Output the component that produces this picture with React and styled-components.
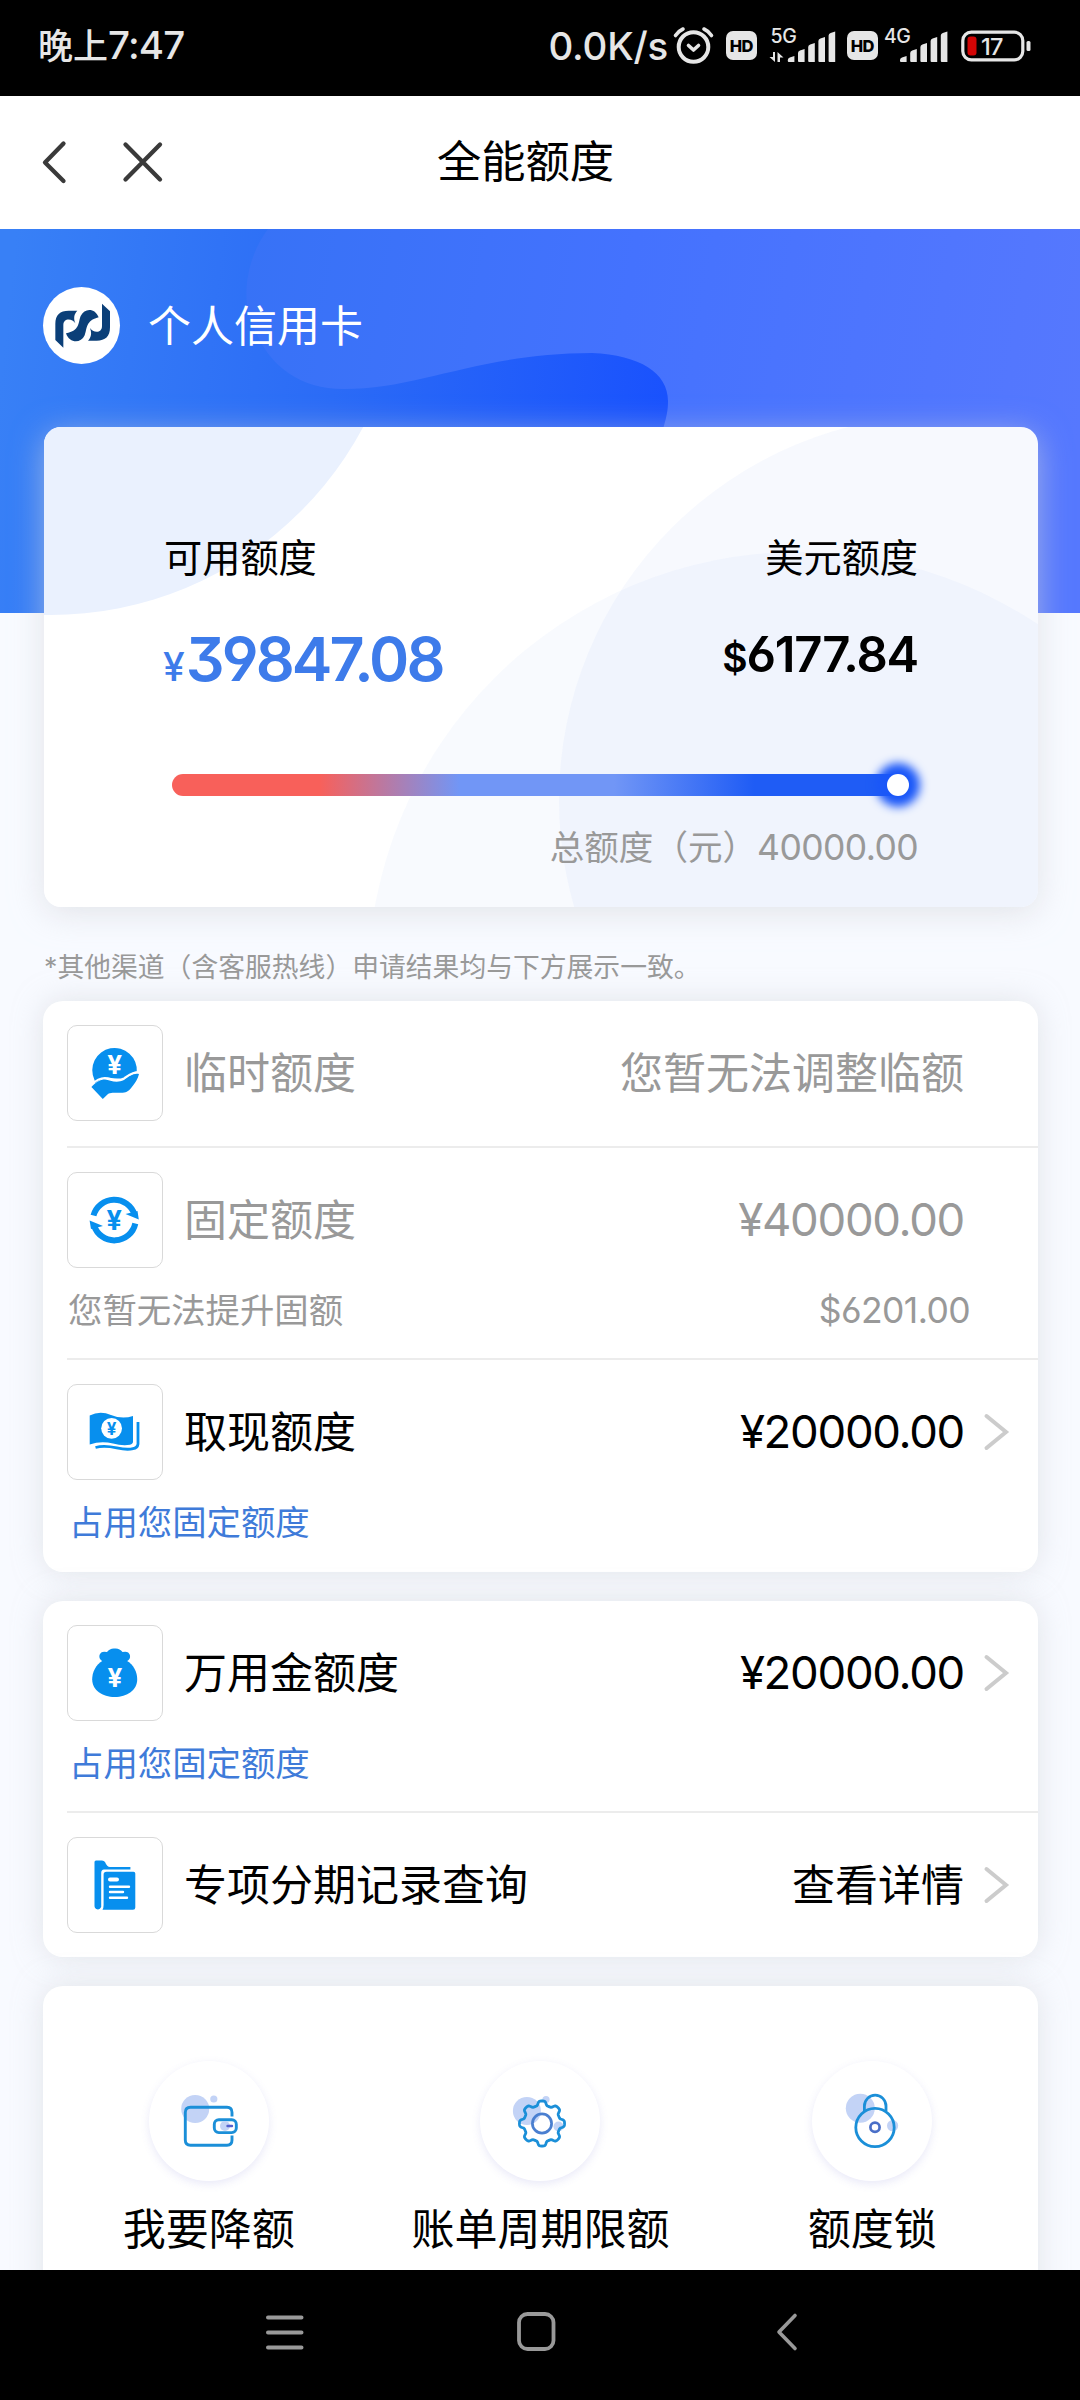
import styled, { createGlobalStyle } from "styled-components";

const GlobalStyle = createGlobalStyle`
    * {
        box-sizing: border-box;
    }

    body {
        margin: 0;
        background-color: #f8faff;
        font-family: "Inter", "Noto Sans CJK SC", sans-serif;
        font-feature-settings: "cv03", "cv04", "cv09";
        color: #000;
    }

    svg {
        display: block;
        flex-shrink: 0;
        overflow: visible;
    }
`

const StyledScreen = styled.div`
    display: flex;
    flex-direction: column;
    width: 1080px;
    height: 2400px;
    overflow: hidden;
`

const StyledStatusBar = styled.div`
    display: flex;
    align-items: center;
    height: 96px;
    padding: 0 49px 5px 38px;
    flex-shrink: 0;
    background-color: #000;
    color: #e6e6e6;
`

const StyledClock = styled.div`
    flex: 1;
    font-size: 35px;
    font-weight: 500;
    line-height: 50px;
    white-space: nowrap;
`

const StyledClockDigits = styled.span`
    font-size: 38.5px;
    font-weight: 500;
    letter-spacing: -0.8px;
`

const StyledSpeed = styled.div`
    font-size: 38.5px;
    font-weight: 500;
    line-height: 50px;
    letter-spacing: -0.2px;
    margin-right: 5px;
`

const StyledHd = styled.div`
    display: flex;
    align-items: center;
    justify-content: center;
    width: 30.5px;
    height: 29px;
    margin-left: ${props => props.$gap}px;
    border-radius: 7px;
    background-color: #e6e6e6;
    color: #000;
    font-size: 16.5px;
    font-weight: 800;
    letter-spacing: -0.6px;
`

const StyledSignal = styled.svg`
    margin-left: ${props => props.$gap}px;
`

const StyledTitleBar = styled.div`
    display: grid;
    grid-template-columns: 1fr auto 1fr;
    align-items: center;
    height: 133px;
    padding: 0 30px 0 39px;
    flex-shrink: 0;
    background-color: #fff;
`

const StyledTitleActions = styled.div`
    display: flex;
    align-items: center;
    gap: 49px;
`

const StyledTitle = styled.div`
    font-size: 44.3px;
    line-height: 58px;
    padding: 0 38px 2px 0;
`

const StyledBody = styled.div`
    display: flex;
    flex-direction: column;
    flex: 1;
    min-height: 0;
    overflow: hidden;
    background-color: #f8faff;
`

const StyledHero = styled.div`
    position: relative;
    height: 384px;
    flex-shrink: 0;
    padding: 58px 43px 0;
`

const StyledHeroArt = styled.svg`
    position: absolute;
    left: 0;
    top: 0;
`

const StyledOwner = styled.div`
    position: relative;
    display: flex;
    align-items: center;
    gap: 28px;
    color: #fff;
    font-size: 43px;
    line-height: 60px;
`

const StyledAvatar = styled.div`
    width: 77px;
    height: 77px;
    border-radius: 50%;
    background-color: #fff;
`

const StyledLimitCard = styled.div`
    position: relative;
    flex-shrink: 0;
    width: 994px;
    height: 480px;
    margin: -186px 0 0 44px;
    padding: 103px 120px 0;
    overflow: hidden;
    border-radius: 17px;
    background-color: #fff;
`

const StyledLimitShadow = styled.div`
    position: relative;
    flex-shrink: 0;
    border-radius: 17px;

    &::before {
        content: "";
        position: absolute;
        left: 44px;
        top: -186px;
        width: 994px;
        height: 480px;
        border-radius: 17px;
        box-shadow: 0 6px 32px rgba(212, 214, 218, 0.6);
    }
`

const StyledLimitArt = styled.svg`
    position: absolute;
    left: 0;
    top: 0;
`

const StyledLimitContent = styled.div`
    position: relative;
`

const StyledLimitRow = styled.div`
    display: flex;
    justify-content: space-between;
`

const StyledLimitLabel = styled.div`
    font-size: 38.2px;
    line-height: 56px;
`

const StyledAvailable = styled.div`
    margin: 38px 0 0 -1px;
    color: #3d7bea;
    font-size: 61px;
    font-weight: 600;
    line-height: 70px;
    letter-spacing: -2.9px;
`

const StyledDollar = styled.div`
    margin-top: 39px;
    font-size: 49px;
    font-weight: 600;
    line-height: 60px;
    letter-spacing: -1.2px;
`

const StyledSign = styled.span`
    margin-right: ${props => props.$gap || 0}px;
    font-size: 39px;
    font-weight: ${props => props.$weight || 500};
`

const StyledTrack = styled.div`
    display: flex;
    justify-content: flex-end;
    height: 22px;
    margin: 72px 0 0 8px;
    border-radius: 11px;
    background: linear-gradient(to right, #f8605a 20%, #7196f6 39%, #7196f6 60%, #1f5cf5 79%);
`

const StyledKnob = styled.div`
    width: 22px;
    height: 22px;
    border-radius: 50%;
    background-color: #fff;
    box-shadow: 0 0 10px 11px #1a57f8;
`

const StyledTotal = styled.div`
    margin-top: 27px;
    color: #999;
    font-size: 34.56px;
    line-height: 50px;
    text-align: right;
    white-space: nowrap;
`

const StyledNote = styled.div`
    margin: 40px 0 14px 44px;
    color: #999;
    font-size: 26.8px;
    line-height: 40px;
    white-space: nowrap;
`

const StyledCard = styled.div`
    width: 995px;
    margin: 0 0 29px 43px;
    flex-shrink: 0;
    border-radius: 20px;
    background-color: #fff;
    box-shadow: 0 0 29px rgba(204, 208, 212, 0.5);
`

const StyledItem = styled.div`
    margin-left: 24px;
    padding: 24px 0 ${props => props.$bottom || 25}px;
    border-bottom: 2px solid #ececec;

    &:last-child {
        border-bottom: none;
    }
`

const StyledItemRow = styled.div`
    display: flex;
    align-items: center;
    padding-right: 29px;
    color: ${props => props.$muted ? "#999" : "#000"};
    font-size: 43px;
    line-height: 60px;
`

const StyledIconBox = styled.div`
    display: flex;
    width: 96px;
    height: 96px;
    border: 1px solid #d9d9d9;
    border-radius: 10px;

    svg {
        margin: -1px;
    }
`

const StyledItemTitle = styled.div`
    flex: 1;
    margin-left: 21px;
`

const StyledItemValue = styled.div`
    margin-right: ${props => props.$arrow ? 19 : 45}px;
    font-size: ${props => props.$digits ? 45.5 : 43}px;
    letter-spacing: ${props => props.$digits ? -1.3 : 0}px;
`

const StyledItemSub = styled.div`
    display: flex;
    justify-content: space-between;
    margin-top: 18px;
    height: 47px;
    padding: 0 68px 0 ${props => props.$link ? 2 : 1}px;
    color: ${props => props.$link ? "#3f7bd9" : "#999"};
    font-size: 34.4px;
    line-height: 50px;
`

const StyledDigits = styled.span`
    font-size: 35.5px;
    letter-spacing: -0.6px;
`

const StyledShortcuts = styled.div`
    display: grid;
    grid-template-columns: repeat(3, 1fr);
    padding-top: 75px;
    height: 360px;
`

const StyledShortcut = styled.div`
    display: flex;
    flex-direction: column;
    align-items: center;
    gap: 18px;
    font-size: 43px;
    line-height: 60px;
`

const StyledShortcutIcon = styled.div`
    width: 120px;
    height: 120px;
    border-radius: 50%;
    background-color: #fff;
    box-shadow: 0 3px 9px rgba(120, 120, 210, 0.16);
`

const StyledNavBar = styled.div`
    display: flex;
    align-items: center;
    height: 130px;
    padding: 0 280px 6px 264px;
    justify-content: space-between;
    flex-shrink: 0;
    background-color: #000;
`

const StyledHomeButton = styled.svg`
    margin-right: 8px;
`

const blue = "#078fee";
const line = "#1b8fd8";

const Bars = ({ x }) => [6, 13, 19, 25, 30.5].map((h, i) => (
    <path
        key={h}
        d={`M${x + i * 10.2} ${34 - h + 4} q0 -2 2 -2.6 l4.6 -1.4 V34 h-5.6 q-1 0 -1 -1z`}
        fill="#e6e6e6"
    />
))

const Alarm = () => (
    <svg width="42" height="40" viewBox="0 0 42 40" fill="none" stroke="#e6e6e6" strokeLinecap="round" strokeLinejoin="round">
        <circle cx="20.5" cy="21" r="14.8" strokeWidth="4" />
        <path d="M15.5 19.5 L20.5 24 L25.5 19.5" strokeWidth="3.6" />
        <path d="M2.5 9.5 Q5.5 5 10 3 M38.5 9.5 Q35.5 5 31 3" strokeWidth="3.6" />
    </svg>
)

const Battery = () => (
    <svg width="70" height="32" viewBox="0 0 70 32">
        <rect x="1.8" y="2.2" width="60" height="27.6" rx="8.5" fill="none" stroke="#e6e6e6" strokeWidth="3.2" />
        <rect x="6.5" y="6.5" width="9" height="19" rx="3" fill="#d20505" />
        <rect x="65.5" y="11" width="4" height="10" rx="1.5" fill="#e6e6e6" />
        <text x="20" y="24.5" fontSize="23.5" fontWeight="500" letterSpacing="-0.8" fill="#e6e6e6">17</text>
    </svg>
)

const Yen = ({ x, y, fill = "#fff", size = 26 }) => (
    <text x={x} y={y + size * 0.364} fontSize={size} fontWeight="700" textAnchor="middle" fill={fill}>¥</text>
)

const HandIcon = () => (
    <svg width="96" height="96" viewBox="0 0 96 96">
        <path d="M27.5 55 A22.3 22.3 0 1 1 69.8 47 C64 47 60 52 56 54 C48 56 42 51 36 53 C32 54.5 30 57 28.5 58z" fill={blue} />
        <path
            d="M24.4 62 C29 57 33 54.5 38 54.5 C43 55.5 50 58.5 57 55 C62 51.5 66 48 72 49 C71 54 68 58 64.5 62.5 C61 67 59 67.6 54 67.8 C47 68 43 67.5 41 69 L35.8 74z"
            fill={blue}
        />
        <path d="M24 60 C29 55 33 52.8 38 52.8 C44 54 51 56 57 53.2 C62 50 66 46.5 72.5 47" fill="none" stroke="#fff" strokeWidth="1.8" />
        <Yen x={47.7} y={39.5} />
    </svg>
)

const CycleIcon = () => (
    <svg width="96" height="96" viewBox="0 0 96 96">
        <g fill="none" stroke={blue} strokeWidth="6">
            <path d="M26.5 43.5 A21.4 21.4 0 0 1 67.5 42.5" />
            <path d="M68.3 51.5 A21.4 21.4 0 0 1 27 53.5" />
        </g>
        <path d="M58.5 42 L70.5 39 L71.8 47.6z M36 54 L24 57 L22.6 48.4z" fill={blue} />
        <Yen x={47.3} y={48} fill={blue} size={27} />
    </svg>
)

const NoteIcon = () => (
    <svg width="96" height="96" viewBox="0 0 96 96">
        <path d="M22.7 31.5 Q33 26.5 44 31 T66 32 V57.5 Q66 60 63 60.8 Q55 62 46 59.5 Q34 56.5 22.7 60.5z" fill={blue} />
        <path d="M71 38 V60 Q70.5 64 66 64.6 C54 68 44 59 28.5 63.5" fill="none" stroke={blue} strokeWidth="2.8" />
        <circle cx="44.6" cy="44.3" r="10.4" fill="#fff" />
        <Yen x={44.6} y={44.4} fill={blue} size={17} />
    </svg>
)

const BagIcon = () => (
    <svg width="96" height="96" viewBox="0 0 96 96">
        <path d="M36 36.5 Q31.5 34 32.5 30 Q34 25.5 40 27 Q43 23 47.7 23.5 Q52.5 23 55.5 27 Q61.5 25.5 62.9 30 Q64 34 59.4 36.5z" fill={blue} />
        <path d="M36 35.5 H59.4 C67 40 70.2 47 70.2 54.5 C70.2 65 60 72 47.7 72 S25.2 65 25.2 54.5 C25.2 47 28.5 40 36 35.5z" fill={blue} />
        <Yen x={47.8} y={52.5} />
    </svg>
)

const FileIcon = () => (
    <svg width="96" height="96" viewBox="0 0 96 96">
        <path d="M27.5 25 Q27.5 23.4 29 23.4 H35 Q37 23.4 38 25 Q40 30 43 30 H63.4 V32.5 H37 Q34.2 32.5 34.2 36 V70 Q33 72.6 30.8 72.4 Q27.5 72 27.5 69z" fill={blue} />
        <path d="M39.5 34.8 H66.5 Q68.3 34.8 68.3 36.6 V70.5 Q68.3 72.8 66 72.8 H35.5 Q36.6 71 36.6 68 V37.5 Q36.6 34.8 39.5 34.8z" fill={blue} />
        <path d="M43 42.5 H50" stroke="#fff" strokeWidth="4" strokeLinecap="round" />
        <path d="M43 49.8 H62 M43 55 H56 M43 60.8 H60" stroke="#fff" strokeWidth="2.4" strokeLinecap="round" />
    </svg>
)

const WalletIcon = () => (
    <svg width="120" height="120" viewBox="0 0 120 120" fill="none">
        <circle cx="46.2" cy="48" r="14" fill="#c3d3f6" />
        <circle cx="64.8" cy="38" r="3.6" fill="#c3d3f6" />
        <path d="M83 55.5 V51.5 Q83 46.3 78 46.3 H41.5 Q36.3 46.3 36.3 51.5 V79 Q36.3 84.2 41.5 84.2 H78 Q83 84.2 83 79 V74.5" stroke={line} strokeWidth="2.9" />
        <rect x="65.3" y="58.8" width="22" height="12.8" rx="4.5" stroke={line} strokeWidth="2.9" />
        <circle cx="76" cy="65" r="5" fill="#c3d3f6" />
        <path d="M78.5 65 H83" stroke="#5360cf" strokeWidth="2.4" strokeLinecap="round" />
    </svg>
)

// eight rounded teeth sampled round the centre
const gearPath = Array.from({ length: 160 }, (_, i) => {
    const a = (i / 160) * Math.PI * 2
    const r = 20.4 + 2.2 * Math.tanh(2.2 * Math.cos(a * 8))
    return `${i ? "L" : "M"}${(62 + r * Math.cos(a)).toFixed(2)} ${(62.5 + r * Math.sin(a)).toFixed(2)}`
}).join(" ") + "z"

const GearIcon = () => (
    <svg width="120" height="120" viewBox="0 0 120 120" fill="none">
        <circle cx="46.9" cy="50" r="14" fill="#c3d3f6" />
        <circle cx="66" cy="38.5" r="3.6" fill="#c3d3f6" />
        <circle cx="78.5" cy="65.5" r="5" fill="#c3d3f6" />
        <path d={gearPath} stroke={line} strokeWidth="2.8" strokeLinejoin="round" />
        <circle cx="62" cy="62.5" r="9.6" stroke="#4a7fd0" strokeWidth="2.7" />
    </svg>
)

const LockIcon = () => (
    <svg width="120" height="120" viewBox="0 0 120 120" fill="none">
        <circle cx="48.3" cy="47.3" r="14.5" fill="#c3d3f6" />
        <circle cx="80.6" cy="64.7" r="5.6" fill="#c3d3f6" />
        <circle cx="63" cy="66.5" r="19.2" stroke={line} strokeWidth="2.8" />
        <path d="M52.4 50 V45 A10.8 10.8 0 0 1 74 45 V50" stroke={line} strokeWidth="2.8" />
        <circle cx="63" cy="66.3" r="4.6" stroke="#4a6fc8" strokeWidth="2.7" />
    </svg>
)

const BankLogo = () => (
    <svg width="77" height="77" viewBox="21 21 231 231">
        <g fill="#0b3f78">
            <path d="M58 180 V132 C58 104 72 92 98 92 H124 C114 102 112 114 118 130 C110 116 82 112 82 136 V203z" />
            <path d="M222 94 V142 C222 170 208 182 182 182 H156 C166 172 168 160 162 144 C170 158 198 162 198 138 V71z" />
            <path d="M188 112 C178 84 146 82 134 108 C126 128 132 152 90 160 C100 190 134 192 146 166 C154 146 148 122 188 112z" />
        </g>
    </svg>
)

const Arrow = () => (
    <svg width="26" height="40" viewBox="0 0 26 40" fill="none">
        <path d="M3.5 4 L23 20 L3.5 36" stroke="#ccc" strokeWidth="4" strokeLinecap="round" />
    </svg>
)

const LimitItem = ({ icon, title, value, digits, sub, subValue, muted, bottom }) => (
    <StyledItem $bottom={bottom}>
        <StyledItemRow $muted={muted}>
            <StyledIconBox>{icon}</StyledIconBox>
            <StyledItemTitle>{title}</StyledItemTitle>
            <StyledItemValue $digits={digits} $arrow={!muted}>{value}</StyledItemValue>
            {!muted && <Arrow />}
        </StyledItemRow>
        {sub && (
            <StyledItemSub $link={!muted}>
                <span>{sub}</span>
                <StyledDigits>{subValue}</StyledDigits>
            </StyledItemSub>
        )}
    </StyledItem>
)

function App() {
    return (
        <StyledScreen>
            <GlobalStyle />
            <StyledStatusBar>
                <StyledClock>晚上<StyledClockDigits>7:47</StyledClockDigits></StyledClock>
                <StyledSpeed>0.0K/s</StyledSpeed>
                <Alarm />
                <StyledHd $gap={11}>HD</StyledHd>
                <StyledSignal $gap={12} width="68" height="44" viewBox="0 -4 68 44">
                    <text x="1.5" y="14.5" fontSize="19.5" fontWeight="500" letterSpacing="-0.3" fill="#e6e6e6">5G</text>
                    <path d="M0.5 29 H4 V24 H6 V34z M8.5 34 V24 L14.5 29.5 H11 V34z" fill="#e6e6e6" />
                    <Bars x={18.8} />
                </StyledSignal>
                <StyledHd $gap={10.5}>HD</StyledHd>
                <StyledSignal $gap={6} width="65" height="44" viewBox="0 -4 65 44">
                    <text x="0" y="14.5" fontSize="19.5" fontWeight="500" letterSpacing="-0.5" fill="#e6e6e6">4G</text>
                    <Bars x={16} />
                </StyledSignal>
                <StyledSignal as="div" $gap={12.5}><Battery /></StyledSignal>
            </StyledStatusBar>
            <StyledTitleBar>
                <StyledTitleActions>
                    <svg width="32" height="48" viewBox="0 0 32 48" fill="none" stroke="#3a3a3a" strokeWidth="4.3" strokeLinecap="round" strokeLinejoin="round">
                        <path d="M24.5 4.5 L6 23.5 L24.5 42" />
                    </svg>
                    <svg width="46" height="46" viewBox="0 0 46 46" fill="none" stroke="#3a3a3a" strokeWidth="4.3" strokeLinecap="round">
                        <path d="M5.5 4.5 L40 39.5 M40 4.5 L5.5 39.5" />
                    </svg>
                </StyledTitleActions>
                <StyledTitle>全能额度</StyledTitle>
            </StyledTitleBar>
            <StyledBody>
                <StyledHero>
                    <StyledHeroArt width="1080" height="384" viewBox="0 0 1080 384">
                        <defs>
                            <linearGradient id="deep" gradientUnits="userSpaceOnUse" x1="0" y1="150" x2="660" y2="220">
                                <stop offset="0" stopColor="#3880f6" />
                                <stop offset="0.5" stopColor="#2b6bf6" />
                                <stop offset="1" stopColor="#1a52fd" />
                            </linearGradient>
                            <linearGradient id="light" gradientUnits="userSpaceOnUse" x1="240" y1="60" x2="1080" y2="200">
                                <stop offset="0" stopColor="#3772f6" />
                                <stop offset="0.45" stopColor="#4472fe" />
                                <stop offset="1" stopColor="#5678fe" />
                            </linearGradient>
                        </defs>
                        <rect width="1080" height="384" fill="url(#deep)" />
                        <path
                            d="M268 0 C244 32 240 78 256 103 C270 137 300 160 344 160 C420 160 480 124 592 124 C640 126 668 144 668 172 C668 186 665 192 659 215 V384 H1080 V0z"
                            fill="url(#light)"
                        />
                    </StyledHeroArt>
                    <StyledOwner>
                        <StyledAvatar><BankLogo /></StyledAvatar>
                        个人信用卡
                    </StyledOwner>
                </StyledHero>
                <StyledLimitShadow />
                <StyledLimitCard>
                    <StyledLimitArt width="994" height="480" viewBox="44 427 994 480">
                        <circle cx="50" cy="260" r="355" fill="#eaf1fe" />
                        <circle cx="944" cy="800" r="385" fill="rgba(60, 120, 240, 0.042)" />
                        <circle cx="799" cy="983" r="431" fill="rgba(60, 120, 240, 0.035)" />
                    </StyledLimitArt>
                    <StyledLimitContent>
                        <StyledLimitRow>
                            <StyledLimitLabel>可用额度</StyledLimitLabel>
                            <StyledLimitLabel>美元额度</StyledLimitLabel>
                        </StyledLimitRow>
                        <StyledLimitRow>
                            <StyledAvailable><StyledSign $gap={4}>¥</StyledSign>39847.08</StyledAvailable>
                            <StyledDollar><StyledSign $weight={600}>$</StyledSign>6177.84</StyledDollar>
                        </StyledLimitRow>
                        <StyledTrack style={{ width: 737 }}>
                            <StyledKnob />
                        </StyledTrack>
                        <StyledTotal>总额度（元）<StyledDigits>40000.00</StyledDigits></StyledTotal>
                    </StyledLimitContent>
                </StyledLimitCard>
                <StyledNote>*其他渠道（含客服热线）申请结果均与下方展示一致。</StyledNote>
                <StyledCard>
                    <LimitItem icon={<HandIcon />} title="临时额度" value="您暂无法调整临额" muted />
                    <LimitItem icon={<CycleIcon />} title="固定额度" value="¥40000.00" digits sub="您暂无法提升固额" subValue="$6201.00" muted />
                    <LimitItem icon={<NoteIcon />} title="取现额度" value="¥20000.00" digits sub="占用您固定额度" bottom={27} />
                </StyledCard>
                <StyledCard>
                    <LimitItem icon={<BagIcon />} title="万用金额度" value="¥20000.00" digits sub="占用您固定额度" />
                    <LimitItem icon={<FileIcon />} title="专项分期记录查询" value="查看详情" bottom={24} />
                </StyledCard>
                <StyledCard>
                    <StyledShortcuts>
                        <StyledShortcut>
                            <StyledShortcutIcon><WalletIcon /></StyledShortcutIcon>
                            我要降额
                        </StyledShortcut>
                        <StyledShortcut>
                            <StyledShortcutIcon><GearIcon /></StyledShortcutIcon>
                            账单周期限额
                        </StyledShortcut>
                        <StyledShortcut>
                            <StyledShortcutIcon><LockIcon /></StyledShortcutIcon>
                            额度锁
                        </StyledShortcut>
                    </StyledShortcuts>
                </StyledCard>
            </StyledBody>
            <StyledNavBar>
                <svg width="42" height="42" viewBox="0 0 42 42" stroke="#999" strokeWidth="4" strokeLinecap="round">
                    <path d="M4 6.5 H37.5 M4 21.5 H37.5 M4 36.5 H37.5" />
                </svg>
                <StyledHomeButton width="42" height="42" viewBox="0 0 42 42" fill="none" stroke="#999" strokeWidth="3.8">
                    <rect x="3" y="3" width="34.5" height="35" rx="8.5" />
                </StyledHomeButton>
                <svg width="24" height="42" viewBox="0 0 24 42" fill="none" stroke="#999" strokeWidth="3.6" strokeLinecap="round" strokeLinejoin="round">
                    <path d="M19 4.5 L3 21 L19 37.5" />
                </svg>
            </StyledNavBar>
        </StyledScreen>
    )
}

export default App
